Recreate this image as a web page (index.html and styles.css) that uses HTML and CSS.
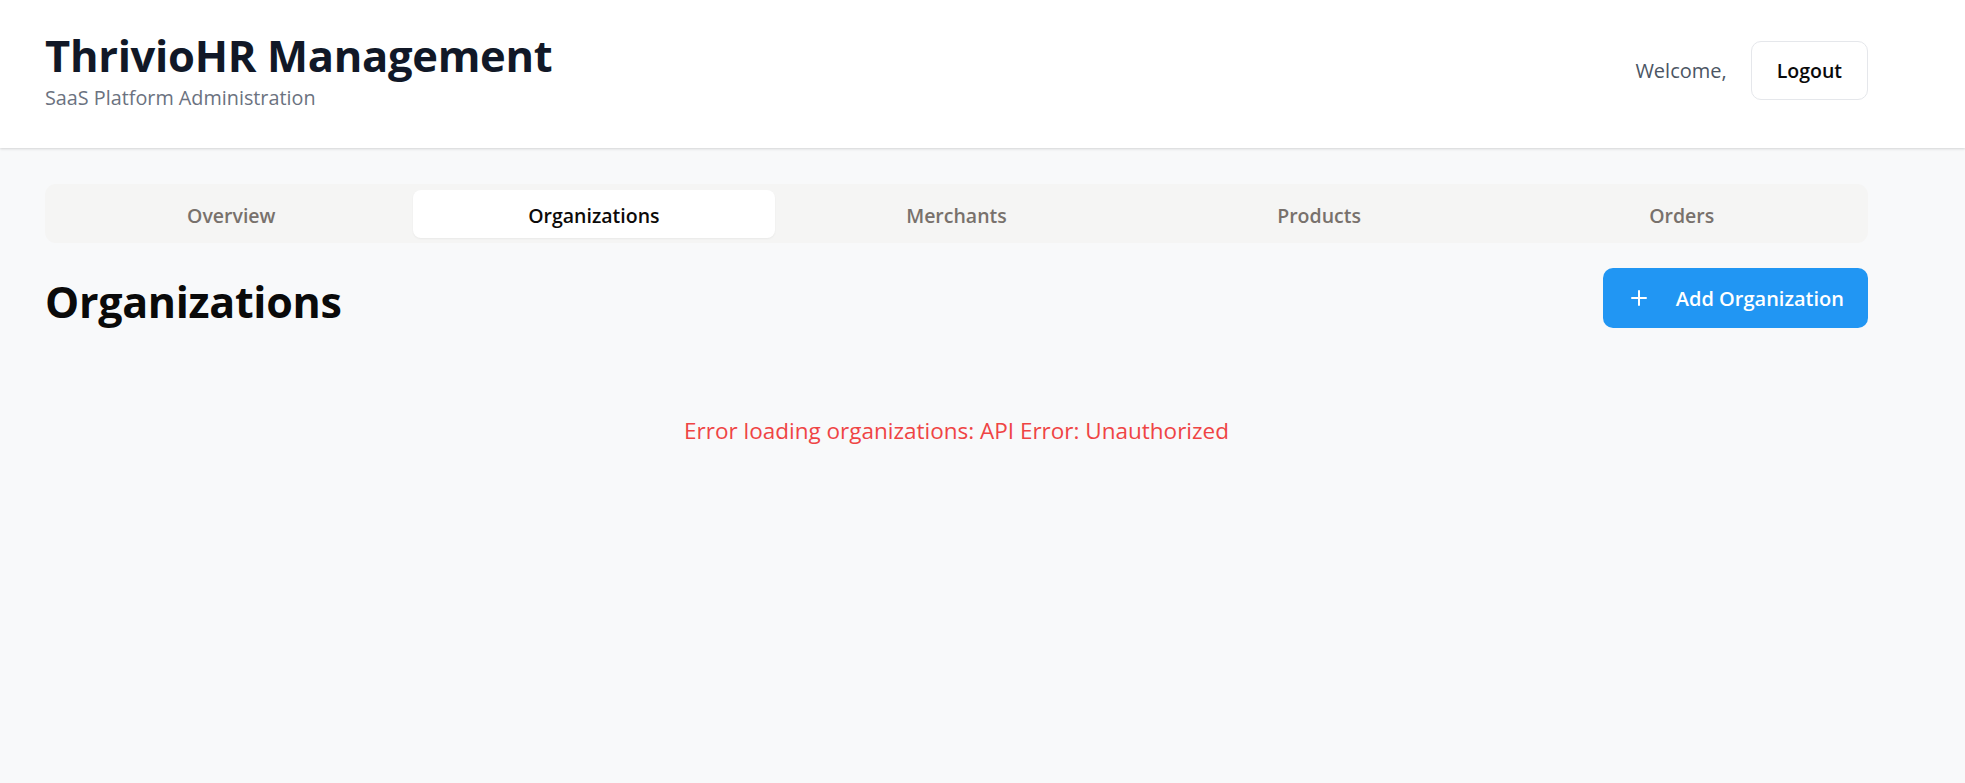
FILE: index.html
```html
<!DOCTYPE html>
<html lang="en">
<head>
<meta charset="utf-8">
<title>ThrivioHR Management</title>
<link rel="stylesheet" href="styles.css">
</head>
<body>
<header class="topbar">
  <div class="container topbar-inner">
    <div class="brand">
      <h1 class="brand-title">ThrivioHR Management</h1>
      <p class="brand-sub">SaaS Platform Administration</p>
    </div>
    <div class="user">
      <span class="welcome">Welcome,</span>
      <button class="btn-outline" type="button">Logout</button>
    </div>
  </div>
</header>
<main class="container main">
  <nav class="tabs">
    <button class="tab" type="button">Overview</button>
    <button class="tab tab-active" type="button">Organizations</button>
    <button class="tab" type="button">Merchants</button>
    <button class="tab" type="button">Products</button>
    <button class="tab" type="button">Orders</button>
  </nav>
  <section class="page-head">
    <h2 class="page-title">Organizations</h2>
    <button class="btn-primary" type="button">
      <svg class="icon-plus" viewBox="0 0 16 16" width="16" height="16" aria-hidden="true">
        <path d="M8 1v14M1 8h14" stroke="currentColor" stroke-width="2" stroke-linecap="round" fill="none"/>
      </svg>
      <span>Add Organization</span>
    </button>
  </section>
  <p class="error">Error loading organizations: API Error: Unauthorized</p>
</main>
</body>
</html>
```

FILE: styles.css
```css
* { box-sizing: border-box; }

html, body {
  margin: 0;
  padding: 0;
}

body {
  background: #f8f9fa;
  font-family: "Open Sans", "Noto Sans", Arial, sans-serif;
  color: #0a0a0a;
  min-height: 783px;
}

button {
  font-family: inherit;
  cursor: pointer;
}

.container {
  width: 1823px;
  margin-left: 45px;
}

.topbar {
  background: #ffffff;
  height: 148px;
  box-shadow: 0 1px 3px rgba(0, 0, 0, 0.1), 0 1px 2px rgba(0, 0, 0, 0.06);
}

.topbar-inner {
  display: flex;
  justify-content: space-between;
  align-items: center;
  padding-top: 31px;
}

.brand-title {
  margin: 0;
  font-size: 43.5px;
  line-height: 50px;
  font-weight: 700;
  color: #111827;
  letter-spacing: -0.3px;
}

.brand-sub {
  margin: 4px 0 0;
  font-size: 19.8px;
  line-height: 25px;
  color: #6b7280;
}

.user {
  display: flex;
  align-items: center;
  gap: 24px;
}

.welcome {
  font-size: 20px;
  color: #4b5563;
}

.btn-outline {
  height: 59px;
  padding: 0 25px;
  background: #ffffff;
  border: 1px solid #e5e7eb;
  border-radius: 10px;
  font-size: 19.5px;
  font-weight: 600;
  color: #0a0a0a;
}

.main {
  padding-top: 36px;
}

.tabs {
  display: flex;
  padding: 6px 5px 5px;
  background: #f5f5f4;
  border-radius: 11px;
}

.tab {
  flex: 1;
  height: 48px;
  padding: 3px 0 0;
  border: 0;
  background: transparent;
  border-radius: 8px;
  font-size: 19.5px;
  font-weight: 600;
  color: #78716c;
}

.tab-active {
  background: #ffffff;
  color: #0c0a09;
  box-shadow: 0 1px 2px rgba(0, 0, 0, 0.05);
}

.page-head {
  display: flex;
  justify-content: space-between;
  align-items: center;
  margin-top: 25px;
}

.page-title {
  margin: 0;
  padding-top: 7px;
  font-size: 43px;
  line-height: 50px;
  font-weight: 700;
  color: #0a0a0a;
  letter-spacing: -0.3px;
}

.btn-primary {
  display: flex;
  align-items: center;
  gap: 29px;
  height: 60px;
  padding: 0 24px 0 28px;
  background: #2196f3;
  border: 0;
  border-radius: 10px;
  color: #ffffff;
  font-size: 20px;
  font-weight: 600;
}

.icon-plus {
  display: block;
  width: 16px;
  height: 16px;
}

.error {
  margin: 87px 0 0;
  text-align: center;
  font-size: 22.5px;
  line-height: 32px;
  color: #ef4444;
}
```
